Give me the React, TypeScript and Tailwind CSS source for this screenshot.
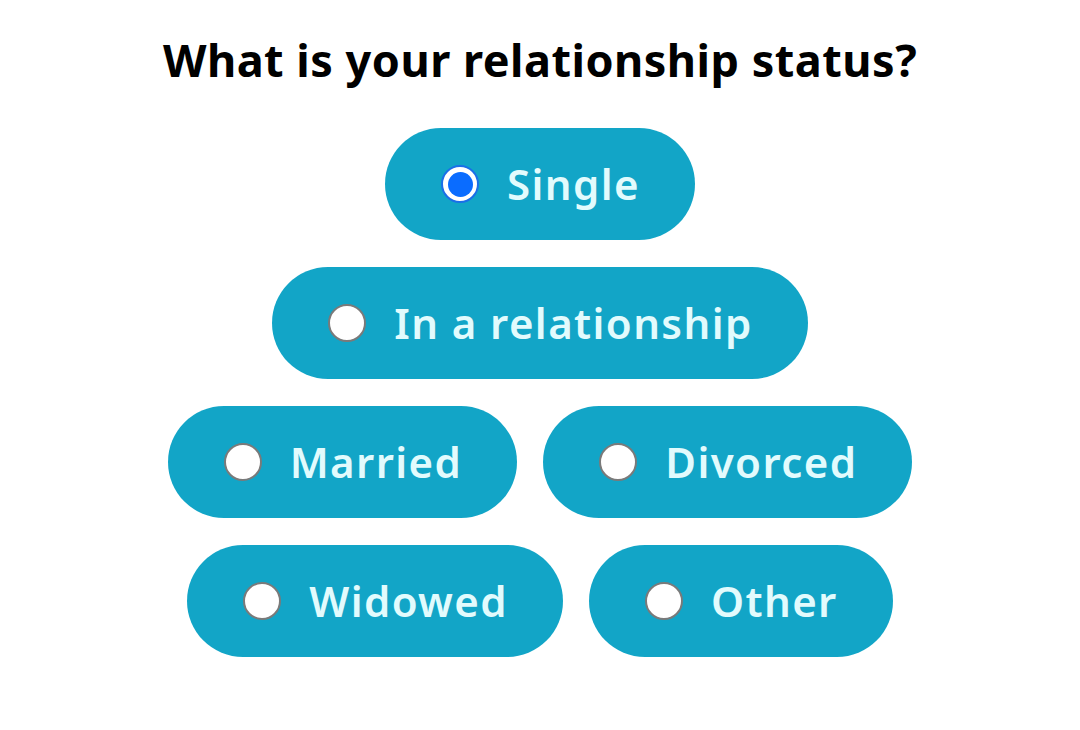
import React, { useState } from 'react';

const rows: string[][] = [
  ['Single'],
  ['In a relationship'],
  ['Married', 'Divorced'],
  ['Widowed', 'Other'],
];

function Radio({ checked }: { checked: boolean }) {
  if (checked) {
    return (
      <span className="w-[38px] h-[38px] rounded-full border-2 border-[#1a6fe8] bg-white flex items-center justify-center shrink-0">
        <span className="w-[25px] h-[25px] rounded-full bg-[#0a6cff]" />
      </span>
    );
  }
  return <span className="w-[38px] h-[38px] rounded-full border-2 border-[#7a7a7a] bg-white shrink-0" />;
}

export default function App() {
  const [value, setValue] = useState('Single');

  return (
    <div className="w-[1080px] h-[730px] bg-white flex flex-col items-center pt-[26px] font-['Noto_Sans',sans-serif]">
      <h1 className="text-[45px] font-bold text-black leading-[68px] tracking-[0.5px]">What is your relationship status?</h1>

      <div className="flex flex-col items-center gap-[27px] mt-[34px]">
        {rows.map((row, i) => (
          <div key={i} className="flex gap-[26px]">
            {row.map((opt) => (
              <button
                key={opt}
                onClick={() => setValue(opt)}
                className="h-[112px] rounded-full bg-[#12a5c7] flex items-center gap-[28px] pl-[56px] pr-[55px]"
              >
                <Radio checked={value === opt} />
                <span className="text-[42px] font-semibold text-[#e2fbfd] leading-none tracking-[1.4px]">{opt}</span>
              </button>
            ))}
          </div>
        ))}
      </div>
    </div>
  );
}
